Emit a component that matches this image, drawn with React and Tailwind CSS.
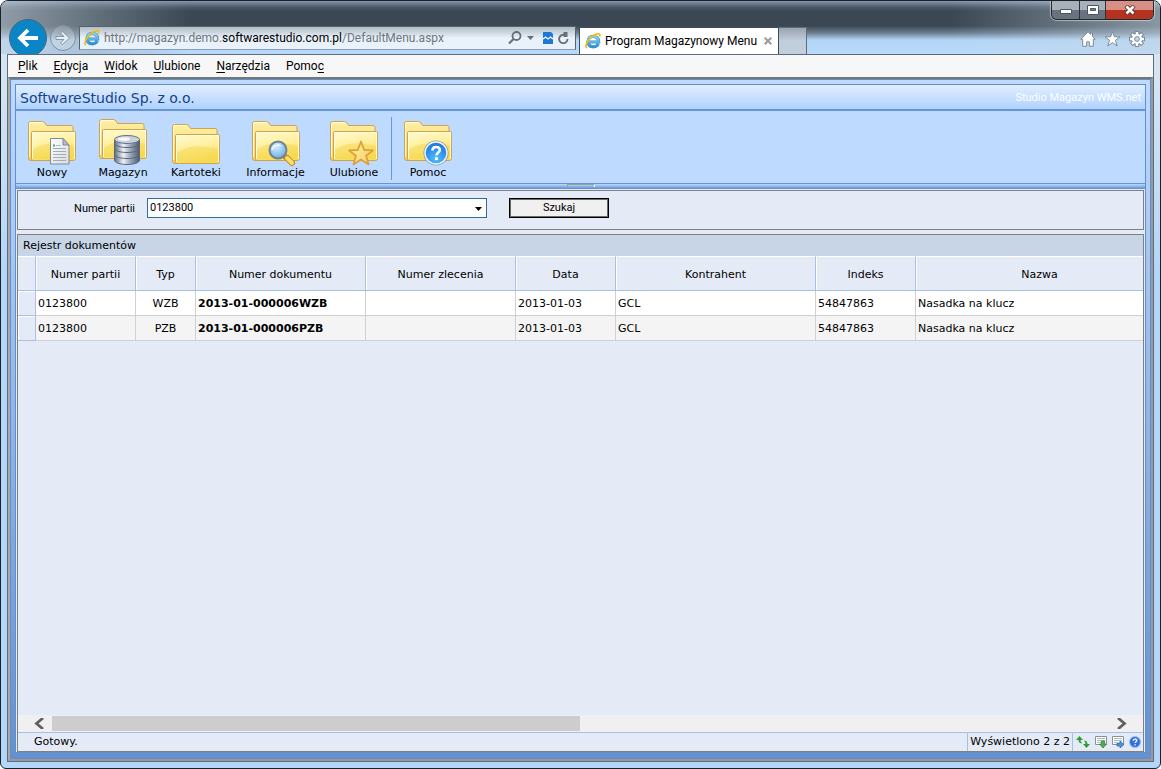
import React, { useState } from "react";

const MENU = [
  ["", "P", "lik"],
  ["", "E", "dycja"],
  ["", "W", "idok"],
  ["", "U", "lubione"],
  ["", "N", "arzędzia"],
  ["Pomo", "c", ""],
];

const TOOLS = [
  { label: "Nowy", top: 3, kind: "doc", width: "w-[48px]" },
  { label: "Magazyn", top: 1, kind: "db", width: "w-[50px]" },
  { label: "Kartoteki", top: 6, kind: "none", width: "w-[52px]" },
  { label: "Informacje", top: 3, kind: "search", width: "w-[63px]" },
  { label: "Ulubione", top: 3, kind: "star", width: "w-[50px]" },
];

const COLUMNS = [
  { name: "Numer partii", width: "w-[100px]" },
  { name: "Typ", width: "w-[60px]" },
  { name: "Numer dokumentu", width: "w-[170px]" },
  { name: "Numer zlecenia", width: "w-[150px]" },
  { name: "Data", width: "w-[100px]" },
  { name: "Kontrahent", width: "w-[200px]" },
  { name: "Indeks", width: "w-[100px]" },
  { name: "Nazwa", width: "w-[248px]" },
];

const ROWS = [
  ["0123800", "WZB", "2013-01-000006WZB", "", "2013-01-03", "GCL", "54847863", "Nasadka na klucz"],
  ["0123800", "PZB", "2013-01-000006PZB", "", "2013-01-03", "GCL", "54847863", "Nasadka na klucz"],
];

/* shared gradients for the svg icons */
const Gradients = () => (
  <svg width="0" height="0" className="absolute" aria-hidden="true">
    <defs>
      <linearGradient id="folderBack" x1="0" y1="0" x2="0" y2="1">
        <stop offset="0" stopColor="#fdf0a8" />
        <stop offset="1" stopColor="#f3d04e" />
      </linearGradient>
      <linearGradient id="folderFront" x1="0" y1="0" x2="0.3" y2="1">
        <stop offset="0" stopColor="#fffbd2" />
        <stop offset="0.5" stopColor="#fff0a0" />
        <stop offset="1" stopColor="#f9de5c" />
      </linearGradient>
      <linearGradient id="metal" x1="0" y1="0" x2="1" y2="0">
        <stop offset="0" stopColor="#5f6c80" />
        <stop offset="0.35" stopColor="#eef2f7" />
        <stop offset="0.6" stopColor="#a3b0c2" />
        <stop offset="1" stopColor="#4d5a70" />
      </linearGradient>
      <linearGradient id="paper" x1="0" y1="0" x2="1" y2="1">
        <stop offset="0" stopColor="#ffffff" />
        <stop offset="1" stopColor="#d8dde2" />
      </linearGradient>
      <radialGradient id="lens" cx="0.4" cy="0.3" r="0.8">
        <stop offset="0" stopColor="#d9efff" />
        <stop offset="1" stopColor="#5ba6e6" />
      </radialGradient>
      <radialGradient id="helpBlue" cx="0.5" cy="0.8" r="0.8">
        <stop offset="0" stopColor="#4fc0ff" />
        <stop offset="1" stopColor="#1e73dd" />
      </radialGradient>
      <linearGradient id="starGold" x1="0" y1="0" x2="1" y2="1">
        <stop offset="0" stopColor="#fff3a8" />
        <stop offset="1" stopColor="#f7cf62" />
      </linearGradient>
      <linearGradient id="ieBlue" x1="0" y1="0" x2="0" y2="1">
        <stop offset="0" stopColor="#8ad8f8" />
        <stop offset="1" stopColor="#2e93d4" />
      </linearGradient>
    </defs>
  </svg>
);

const FolderOverlay = ({ kind }) => {
  if (kind === "doc") {
    return (
      <g>
        <path d="M22.500 19.500h12.500l6 6.500v19h-18.500z" fill="url(#paper)" stroke="#808890" />
        <path d="M35 19.500v6.500h6z" fill="#b7bfc6" stroke="#808890" />
        <path d="M25 29.500h13M25 32.500h13M25 35.500h13M25 38.500h13M25 41.500h13" stroke="#a4abb2" />
        <path d="M28 26.500h5" stroke="#b4bbc1" />
        <path d="M25 25.500h2v2h-2z" fill="#4fae58" />
      </g>
    );
  }
  if (kind === "db") {
    return (
      <g>
        {[37, 31, 25].map((y) => (
          <path
            key={y}
            d={`M15.500 ${y - 1}v5c0 6 25 6 25 0v-5z`}
            fill="url(#metal)"
            stroke="#59667a"
          />
        ))}
        <path d="M15.500 21v3c0 6 25 6 25 0v-3z" fill="url(#metal)" stroke="#59667a" />
        <ellipse cx="28" cy="20.500" rx="12.500" ry="4" fill="#c9d1dc" stroke="#66748a" />
        <ellipse cx="25" cy="20" rx="6" ry="1.800" fill="#f7f9fb" />
      </g>
    );
  }
  if (kind === "search") {
    return (
      <g>
        <path d="M31 37l3 3" stroke="#6b7480" strokeWidth="3" />
        <path d="M35 39l5 5" stroke="#c08418" strokeWidth="6" strokeLinecap="round" />
        <path d="M35 39l5 5" stroke="#ffdc62" strokeWidth="4" strokeLinecap="round" />
        <path d="M37 39l4 4" stroke="#fff3b4" strokeWidth="1" />
        <circle cx="26" cy="31" r="8.500" fill="url(#lens)" stroke="#74808e" strokeWidth="2" />
        <path d="M20 31c1-5 6-6 9-4" fill="none" stroke="#eef8ff" strokeWidth="1.500" />
      </g>
    );
  }
  if (kind === "star") {
    return (
      <path
        d="M31 22.500l3.200 8.500 8.800.4-6.900 5.400 2.500 8.700-7.600-5-7.600 5 2.500-8.700-6.900-5.400 8.800-.4z"
        fill="url(#starGold)"
        stroke="#dca03c"
        strokeWidth="1.800"
        strokeLinejoin="round"
      />
    );
  }
  if (kind === "help") {
    return (
      <g>
        <circle cx="32" cy="34" r="12.500" fill="#8d98a6" />
        <circle cx="32" cy="34" r="11.700" fill="#f4f8fc" />
        <circle cx="32" cy="34" r="10.300" fill="url(#helpBlue)" />
        <path
          d="M28.500 31.500c0-4.800 7.300-4.500 7.300-.6 0 2.600-3.300 2.600-3.300 5.600"
          fill="none"
          stroke="#fff"
          strokeWidth="2.600"
        />
        <path d="M31 38.200h3v2.800h-3z" fill="#fff" />
      </g>
    );
  }
  return null;
};

const FolderIcon = ({ top, kind }) => (
  <svg width="48" height="48" viewBox="0 0 48 48" aria-hidden="true" className="shrink-0">
    <g transform={`translate(0 ${top - 1})`}>
      <path
        d="M.5 37V2.500Q.5.500 2.500.500h12q1.500 0 2.500 1.500l1.500 2.500h24.500q2 0 2 2V38q0 1.500-1.500 1.500H2.500Q.5 39.500.5 37z"
        fill="url(#folderBack)"
        stroke="#d3a24c"
      />
      <path d="M1.500 36V3q0-1.500 1.500-1.500h11.500" fill="none" stroke="#fffbe0" />
      <path
        d="M3.500 12q0-1.500 1.500-1.500h41q1.500 0 1.500 1.500v25.500q0 2-2 2H5q-1.500 0-1.500-2z"
        fill="url(#folderFront)"
        stroke="#d3a24c"
      />
      <path d="M4.500 29c10-7 20-9 42-4v13h-42z" fill="#f3d142" opacity="0.400" />
      <path d="M4.500 38V11.500h42V38" fill="none" stroke="#fffce0" />
    </g>
    <FolderOverlay kind={kind} />
  </svg>
);

const IeIcon = ({ className }) => (
  <svg viewBox="0 0 16 16" className={className} aria-hidden="true">
    <path
      d="M13.200 10.800c-1.200 4.300-10.200 4.300-10.200-2.300 0-7 10.700-7 10.700.500H5"
      fill="none"
      stroke="#3b8cc4"
      strokeWidth="3.200"
    />
    <path
      d="M13.200 10.800c-1.200 4.300-10.200 4.300-10.200-2.300 0-7 10.700-7 10.700.500H5"
      fill="none"
      stroke="url(#ieBlue)"
      strokeWidth="2.200"
    />
    <path
      d="M2 15C-1.500 12.500 5 3.500 11 1.300c3-1.200 4.500-.3 3.600 2.200"
      fill="none"
      stroke="#f5b915"
      strokeWidth="1.700"
    />
  </svg>
);

const WindowButtons = () => (
  <div className="flex h-[19px] overflow-hidden rounded-b-md border border-t-0 border-[#222a31] shadow-[0_0_1px_1px_rgba(255,255,255,0.45)]">
    <button
      aria-label="Minimalizuj"
      className="flex w-[28px] items-center justify-center border-r border-[#2b343c] bg-linear-to-b from-[#a8b0b9] from-50% to-[#68737f] to-50%"
    >
      <svg width="12" height="6" viewBox="0 0 12 6" className="mt-[4px]">
        <path d="M.5.500h11v4H.5z" fill="#fff" stroke="#4c5660" />
      </svg>
    </button>
    <button
      aria-label="Maksymalizuj"
      className="flex w-[26px] items-center justify-center border-r border-[#2b343c] bg-linear-to-b from-[#a8b0b9] from-50% to-[#68737f] to-50%"
    >
      <svg width="12" height="10" viewBox="0 0 12 10">
        <path d="M.5.500h11v9H.5z" fill="#fff" stroke="#4c5660" />
        <path d="M3.500 3.500h5v2h-5z" fill="#7d8791" stroke="#4c5660" />
      </svg>
    </button>
    <button
      aria-label="Zamknij"
      className="flex w-[47px] items-center justify-center bg-linear-to-b from-[#d98f84] from-50% to-[#b53120] to-50%"
    >
      <svg width="12" height="10" viewBox="0 0 12 10">
        <path d="M2 1l8 8M10 1L2 9" stroke="#5c3a3a" strokeWidth="4.500" />
        <path d="M2.500 1.500l7 7M9.500 1.500l-7 7" stroke="#fff" strokeWidth="2.600" />
      </svg>
    </button>
  </div>
);

const BrowserBar = () => (
  <header className="relative flex h-[53px] shrink-0 overflow-hidden bg-[linear-gradient(90deg,rgba(200,212,222,0.6)_0px,rgba(150,165,178,0.45)_90px,transparent_190px,transparent_82%,rgba(200,215,228,0.55)_100%),linear-gradient(180deg,#8795ad_0px,#4b5a6c_6px,#3b4853_10px,#3b4853_25px,#6b7f92_32px,#b3d5f6_39px,#b9dafb_53px)] pl-[8px] pr-[8px]">
    <button
      aria-label="Wstecz"
      className="mt-[18px] flex h-[38px] w-[38px] shrink-0 items-center justify-center rounded-full border border-[#46647d] bg-[#0a86c6]"
    >
      <svg width="22" height="20" viewBox="0 0 22 20">
        <path d="M3 10H21M11 2L3 10l8 8" fill="none" stroke="#fff" strokeWidth="3.800" />
      </svg>
    </button>
    <button
      aria-label="Dalej"
      className="mt-[24px] ml-[3px] flex h-[26px] w-[26px] shrink-0 items-center justify-center rounded-full border border-[#7f8f9e] bg-white/20"
    >
      <svg width="16" height="14" viewBox="0 0 16 14">
        <path d="M1 5.500h8L5.500 2l2-1.500L14.500 7l-7 6.500-2-1.500L9 8.500H1z" fill="#e9f1f8" stroke="#8796a5" />
      </svg>
    </button>
    <div className="mt-[25px] ml-[3px] flex h-[24px] w-[497px] items-center border border-[#55626f] border-b-[#8ba0b5] bg-linear-to-b from-[#b2bcc5] to-[#e9f2fb] to-50% pl-[4px]">
      <IeIcon className="h-[16px] w-[16px] shrink-0" />
      <input
        aria-label="Adres"
        className="sr-only"
        readOnly
        value="http://magazyn.demo.softwarestudio.com.pl/DefaultMenu.aspx"
      />
      <span className="ml-[4px] grow truncate text-[12px] text-[#6f767d]">
        http://magazyn.demo.<span className="text-black">softwarestudio.com.pl</span>/DefaultMenu.aspx
      </span>
      <button aria-label="Szukaj w sieci" className="mr-[5px]">
        <svg width="14" height="14" viewBox="0 0 14 14" className="block">
          <circle cx="8.500" cy="5" r="4" fill="none" stroke="#66707a" strokeWidth="1.800" />
          <path d="M5.500 8L1 12.500" stroke="#66707a" strokeWidth="2.200" />
        </svg>
      </button>
      <button aria-label="Historia" className="mr-[9px]">
        <svg width="7" height="4" viewBox="0 0 7 4" className="block">
          <path d="M0 0h7L3.500 4z" fill="#66707a" />
        </svg>
      </button>
      <button aria-label="Widok zgodności" className="mr-[5px]">
        <svg width="10" height="12" viewBox="0 0 10 12" className="block">
          <path d="M0 0h8l2 2v10H0z" fill="#1f78d8" />
          <path d="M0 7l2.500-2L5 7l2.500-2L10 7" fill="none" stroke="#fff" strokeWidth="1.200" />
        </svg>
      </button>
      <button aria-label="Odśwież" className="mr-[6px]">
        <svg width="11" height="12" viewBox="0 0 11 12" className="block">
          <path d="M9.500 7a4.200 4.200 0 1 1-3-4" fill="none" stroke="#66707a" strokeWidth="1.900" />
          <path d="M5.500 0L9.500 0v5L5.500 5z" fill="#66707a" />
        </svg>
      </button>
    </div>
    <div className="mt-[26px] ml-[3px] flex h-[27px] w-[200px] shrink-0 items-center border border-b-0 border-[#3f4c58] bg-white pl-[5px]">
      <IeIcon className="h-[16px] w-[16px] shrink-0" />
      <span className="ml-[4px] grow text-[12px] whitespace-nowrap text-black">Program Magazynowy Menu</span>
      <button aria-label="Zamknij kartę" className="mr-[6px]">
        <svg width="8" height="8" viewBox="0 0 8 8" className="block">
          <path d="M.7.700l6.600 6.600M7.300.700L.7 7.300" stroke="#9a9a9a" strokeWidth="2" />
        </svg>
      </button>
    </div>
    <button
      aria-label="Nowa karta"
      className="mt-[26px] h-[27px] w-[28px] shrink-0 border border-b-0 border-l-0 border-[#5f6d7a] bg-linear-to-b from-[#9aa4ae] to-[#c1cedb] to-50%"
    />
    <div className="absolute top-0 right-[6px]">
      <WindowButtons />
    </div>
    <div className="mt-[29px] mr-[7px] ml-auto flex h-[17px] gap-[8px]">
      <button aria-label="Strona główna">
        <svg width="16" height="16" viewBox="0 0 16 16" className="block">
          <path
            d="M8 .8L.8 8.300h1.900v7h4v-4.500h2.600v4.500h4v-7h1.900L12.500 5.500V2h-2v1.400z"
            fill="#fff"
            stroke="#7d8b98"
          />
        </svg>
      </button>
      <button aria-label="Ulubione strony">
        <svg width="17" height="16" viewBox="0 0 17 16" className="block">
          <path
            d="M8.500.800l1.900 5h5.500l-4.400 3.500 1.700 5.700-4.700-3.500L3.800 15l1.700-5.700L1.100 5.800h5.500z"
            fill="#fff"
            stroke="#7d8b98"
          />
        </svg>
      </button>
      <button aria-label="Narzędzia przeglądarki">
        <svg width="16" height="16" viewBox="0 0 16 16" className="block">
          <g stroke="#7d8b98" strokeWidth="4.400">
            <path d="M8 0v16M0 8h16M2.300 2.300l11.400 11.400M13.700 2.300L2.300 13.700" />
          </g>
          <circle cx="8" cy="8" r="6" fill="#7d8b98" />
          <g stroke="#fff" strokeWidth="2.400">
            <path d="M8 1v14M1 8h14M3 3l10 10M13 3L3 13" />
          </g>
          <circle cx="8" cy="8" r="5" fill="#fff" />
          <circle cx="8" cy="8" r="2.400" fill="#b9dafb" stroke="#7d8b98" />
        </svg>
      </button>
    </div>
  </header>
);

const MenuBar = () => (
  <nav className="flex h-[22px] shrink-0 items-center gap-[16px] bg-[#f7f7f7] pl-[10px] text-[12px] text-black">
    {MENU.map(([before, key, after]) => (
      <button key={before + key + after} className="leading-[16px]">
        {before}
        <span className="underline underline-offset-2">{key}</span>
        {after}
      </button>
    ))}
  </nav>
);

const Toolbar = () => (
  <div className="flex h-[72px] shrink-0 bg-[#bfdaff] pt-[8px] pl-[12px]">
    <div className="flex items-start gap-[22px]">
      {TOOLS.map((tool) => (
        <button
          key={tool.label}
          className={`flex flex-col items-center leading-[12px] whitespace-nowrap ${tool.width}`}
        >
          <FolderIcon top={tool.top} kind={tool.kind} />
          {tool.label}
        </button>
      ))}
    </div>
    <div className="mx-[12px] -mt-[2px] mb-[3px] w-px bg-[#6d98d6]" />
    <button className="flex flex-col items-center self-start leading-[12px]">
      <FolderIcon top={3} kind="help" />
      Pomoc
    </button>
  </div>
);

const SearchForm = () => {
  const [batch, setBatch] = useState("0123800");

  return (
    <form
      onSubmit={(e) => e.preventDefault()}
      className="flex h-[40px] shrink-0 items-start border border-[#808080] bg-[#e4ebf6] pt-[7px] font-[Roboto,'Liberation_Sans',sans-serif] text-[11px]"
    >
      <label htmlFor="batch" className="w-[117px] text-right leading-[22px]">
        Numer partii
      </label>
      <div className="relative ml-[12px] w-[340px]">
        <select
          id="batch"
          value={batch}
          onChange={(e) => setBatch(e.target.value)}
          className="h-[20px] w-full appearance-none border border-[#2f6f9f] bg-white px-[2px]"
        >
          <option>0123800</option>
        </select>
        <svg
          width="7"
          height="4"
          viewBox="0 0 7 4"
          className="pointer-events-none absolute top-[9px] right-[5px]"
        >
          <path d="M0 0h7L3.500 4z" fill="#000" />
        </svg>
      </div>
      <button
        type="submit"
        className="ml-[22px] h-[20px] w-[100px] border border-black bg-[#f0f0f0] leading-[18px] shadow-[inset_0_0_0_1px_#696969]"
      >
        Szukaj
      </button>
    </form>
  );
};

const ResultTable = () => (
  <div className="min-h-0 grow overflow-hidden">
    <table className="w-[1146px] table-fixed border-separate border-spacing-0">
      <thead>
        <tr className="h-[35px]">
          <th className="w-[18px] border-t border-r border-b border-t-white border-r-[#a9c1e0] border-b-[#a9c1e0] bg-[#e4ebf6]" />
          {COLUMNS.map((col) => (
            <th
              key={col.name}
              className={`${col.width} border-t border-r border-b border-t-white border-r-[#a9c1e0] border-b-[#a9c1e0] bg-[#e4ebf6] pt-[4px] font-normal shadow-[inset_1px_0_0_#fff]`}
            >
              {col.name}
            </th>
          ))}
        </tr>
      </thead>
      <tbody>
        {ROWS.map((row, i) => (
          <tr key={row[2]} className={`h-[25px] ${i % 2 ? "bg-[#f4f4f4]" : "bg-white"}`}>
            <td className="border-r border-b border-[#a9c1e0] bg-[#e4ebf6] shadow-[inset_1px_1px_0_#fff]" />
            {row.map((cell, j) => (
              <td
                key={j}
                className={`border-r border-b border-[#d0d0d0] px-[2px] pt-[3px] whitespace-nowrap ${
                  j === 1 ? "text-center" : ""
                } ${j === 2 ? "font-bold" : ""}`}
              >
                {cell}
              </td>
            ))}
          </tr>
        ))}
      </tbody>
    </table>
  </div>
);

const ScrollBar = () => (
  <div className="flex h-[17px] shrink-0 items-center bg-[#f0f0f0] pl-[16px] pr-[15px]">
    <button aria-label="Przewiń w lewo" className="w-[18px]">
      <svg width="11" height="11" viewBox="0 0 11 11">
        <path d="M9 0L2.500 5.500 9 11" fill="none" stroke="#606060" strokeWidth="2.800" />
      </svg>
    </button>
    <div className="h-[15px] grow">
      <div className="h-full w-[528px] bg-[#cdcdcd]" />
    </div>
    <button aria-label="Przewiń w prawo" className="w-[12px]">
      <svg width="11" height="11" viewBox="0 0 11 11">
        <path d="M2 0l6.500 5.500L2 11" fill="none" stroke="#606060" strokeWidth="2.800" />
      </svg>
    </button>
  </div>
);

const StatusBar = () => (
  <div className="flex h-[19px] shrink-0 items-center border-t border-[#a9c1e0] pl-[16px]">
    <span className="grow">Gotowy.</span>
    <span className="flex h-full items-center border-x border-[#a9c1e0] px-[2px] whitespace-nowrap">
      Wyświetlono 2 z 2
    </span>
    <div className="flex items-center gap-[5px] pr-[2px] pl-[3px]">
      <button aria-label="Odśwież listę">
        <svg width="14" height="12" viewBox="0 0 14 12" className="block">
          <path d="M3.500 0L0 4h2.500c0 2.500 1.500 3.500 4 3.500C5 6.500 4.600 5.500 4.600 4H7z" fill="#2f9e2f" />
          <path d="M10.500 12l3.500-4h-2.500c0-2.500-1.500-3.500-4-3.500 1.500 1 1.900 2 1.900 3.500H7z" fill="#2f9e2f" />
        </svg>
      </button>
      <button aria-label="Eksportuj">
        <svg width="12" height="12" viewBox="0 0 12 12" className="block">
          <path d="M.5.500h11v8H.5z" fill="#fff" stroke="#8a9099" />
          <path d="M2 2.500h8M2 4.500h8M2 6.500h4" stroke="#b4b9c0" />
          <path d="M6.500 5h3v3h2L8 12 4.500 8h2z" fill="#4caf50" stroke="#357a38" strokeWidth="0.700" />
        </svg>
      </button>
      <button aria-label="Przenieś">
        <svg width="12" height="12" viewBox="0 0 12 12" className="block">
          <path d="M.5.500h11v8H.5z" fill="#fff" stroke="#8a9099" />
          <path d="M2 2.500h8M2 4.500h8M2 6.500h3" stroke="#b4b9c0" />
          <path d="M5 7h3V5l4 3.500L8 12v-2H5z" fill="#4f8fe0" stroke="#2d62b0" strokeWidth="0.700" />
        </svg>
      </button>
      <button aria-label="Pomoc do listy">
        <svg width="12" height="12" viewBox="0 0 12 12" className="block">
          <circle cx="6" cy="6" r="5.500" fill="#2f6fe0" stroke="#9bbcf0" />
          <path d="M4.200 4.800c0-2.300 3.600-2.200 3.600-.3 0 1.200-1.700 1.200-1.700 2.500" fill="none" stroke="#fff" strokeWidth="1.400" />
          <path d="M5.400 8.200h1.400v1.400H5.400z" fill="#fff" />
        </svg>
      </button>
    </div>
  </div>
);

const App = () => {
  return (
    <div className="flex h-screen flex-col overflow-hidden rounded-t-lg rounded-b-md border border-[#1b2128] bg-linear-to-b from-[#d5e4f1] from-10% to-[#b4d6fa] to-35% font-[Roboto,'Open_Sans',sans-serif] text-black">
      <Gradients />
      <BrowserBar />
      <div className="mx-[6px] mb-[6px] flex min-h-0 grow flex-col border border-[#5d6c7d]">
        <MenuBar />
        {/* page frame */}
        <div className="flex min-h-0 grow flex-col border-2 border-t-[#77776c] border-r-[#9a9a98] border-b-[#9a9a98] border-l-[#a9a9a5] bg-[#b9d5fb] font-['DejaVu_Sans',Verdana,sans-serif] text-[11px]">
          <div className="flex min-h-0 grow flex-col border border-[#5f8fd0] bg-linear-to-b from-[#bfdaff] to-[#6591cd] px-[4px] pt-[4px] pb-[5px]">
            <div className="flex min-h-0 grow flex-col border border-[#5f8fd0] bg-[#e4ebf6]">
              <div className="flex h-[26px] shrink-0 items-center justify-between border-b-2 border-[#6595d6] bg-linear-to-b from-[#e2eeff] to-[#afd2ff] px-[4px] pt-[2px]">
                <h1 className="text-[14px] leading-[20px] text-[#15428b]">SoftwareStudio Sp. z o.o.</h1>
                <span className="font-[Roboto,sans-serif] text-[11px] text-white">
                  Studio Magazyn WMS.net
                </span>
              </div>
              <Toolbar />
              <div className="flex h-[6px] shrink-0 justify-center border-t border-[#6595d6] bg-linear-to-b from-[#bfdaff] to-[#5c8bcd]">
                <div className="h-[3px] w-[28px] border border-b-0 border-[#a0a0a0] border-r-white" />
              </div>
              <main className="flex min-h-0 grow flex-col gap-[4px] px-px pt-px">
                <SearchForm />
                <section className="flex min-h-0 grow flex-col border border-[#808080] bg-[#e4ebf6]">
                  <h2 className="h-[21px] shrink-0 bg-[#c8d5e7] pl-[5px] leading-[21px]">
                    Rejestr dokumentów
                  </h2>
                  <ResultTable />
                  <ScrollBar />
                  <StatusBar />
                </section>
              </main>
            </div>
          </div>
        </div>
      </div>
    </div>
  );
};

export default App;
